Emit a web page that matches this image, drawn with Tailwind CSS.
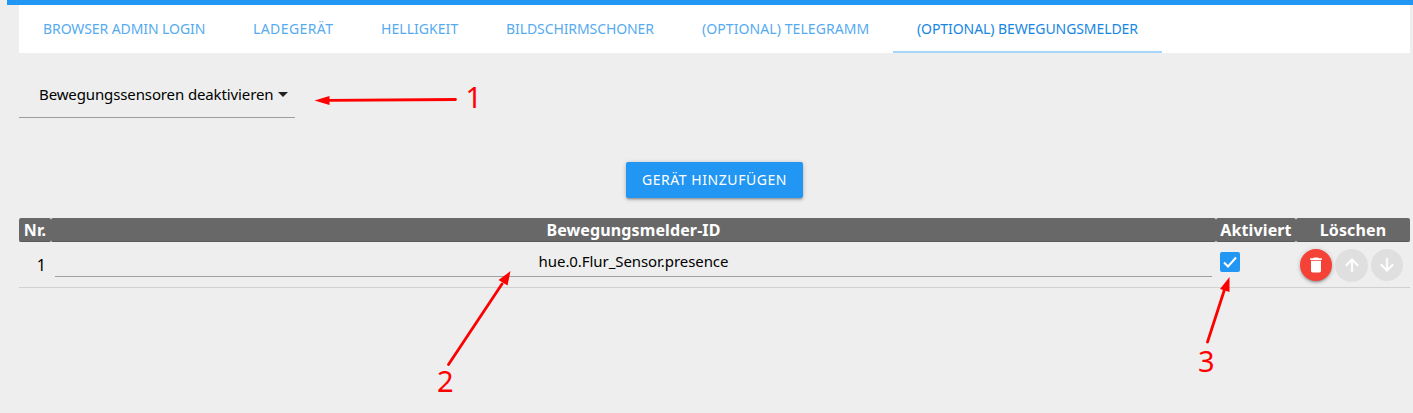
<!DOCTYPE html>
<html lang="de">
<head>
<meta charset="utf-8">
<title>Bewegungsmelder</title>
<script src="https://cdn.jsdelivr.net/npm/@tailwindcss/browser@4"></script>
</head>
<body class="relative h-[413px] w-[1413px] overflow-hidden bg-[#eeeeee] font-['Noto_Sans',sans-serif] text-black">
<div class="ml-[7px] h-[5px] bg-[#2196f3]"></div>
<main class="ml-[19px] w-[1391px]">
  <nav class="flex h-12 bg-white text-[14px] leading-[48px] whitespace-nowrap text-[#56abf0]">
    <a class="w-[210px] pl-6 tracking-[-0.09px]">BROWSER ADMIN LOGIN</a>
    <a class="w-[128px] pl-6 tracking-[0.4px]">LADEGERÄT</a>
    <a class="w-[125px] pl-6 tracking-[0.05px]">HELLIGKEIT</a>
    <a class="w-[196px] pl-6 tracking-[-0.09px]">BILDSCHIRMSCHONER</a>
    <a class="w-[215px] pl-6 tracking-[0.08px]">(OPTIONAL) TELEGRAMM</a>
    <a class="w-[269px] border-b-2 border-[#a6d5fa] pl-6 tracking-[-0.08px] text-[#1686e4]">(OPTIONAL) BEWEGUNGSMELDER</a>
  </nav>
  <div class="mt-[18px] flex h-[47px] w-[276px] items-center border-b border-[#9e9e9e] pl-[20px] text-[15px] whitespace-nowrap">
    <span class="w-[239px] pt-px tracking-[-0.12px]">Bewegungssensoren deaktivieren</span>
    <svg class="h-[5px] w-[10px]" viewBox="0 0 10 5"><path d="M0 0h10L5 5z" fill="#212121"/></svg>
  </div>
  <div class="mt-11 flex h-9 pl-[607px]">
    <button class="w-[177px] rounded-[2px] bg-[#2196f3] text-[14px] leading-9 tracking-[0.55px] whitespace-nowrap text-white shadow-[0_2px_2px_rgba(0,0,0,0.14),0_3px_1px_-2px_rgba(0,0,0,0.12),0_1px_5px_rgba(0,0,0,0.2)]">GERÄT HINZUFÜGEN</button>
  </div>
  <div class="mt-5 flex h-6 bg-[#eeeeee] text-center text-[16px] leading-6 font-bold tracking-[0.12px] whitespace-nowrap text-white">
    <div class="w-8 rounded-[2px] border-b border-[#5a5a5a] bg-[#686868]">Nr.</div>
    <div class="w-[1165px] rounded-[2px] border-b border-[#5a5a5a] bg-[#686868]">Bewegungsmelder-ID</div>
    <div class="w-20 rounded-[2px] border-b border-[#5a5a5a] bg-[#686868]">Aktiviert</div>
    <div class="w-[114px] rounded-[2px] border-b border-[#5a5a5a] bg-[#686868]">Löschen</div>
  </div>
  <div class="flex h-[46px] border-b border-[#d0d0d0] text-[16px]">
    <div class="w-9 pt-[11px] pr-[9px] text-right">1</div>
    <div class="h-[35px] w-[1157px] border-b border-[#9e9e9e] pt-[8px] text-center text-[15px] tracking-[-0.07px]">hue.0.Flur_Sensor.presence</div>
    <div class="w-[88px] pt-[10px] pl-2">
      <svg class="h-5 w-5 rounded-[2px] bg-[#2196f3]" viewBox="0 0 20 20" fill="none" stroke="white" stroke-width="2"><path d="M4 10.5l4 4 8-9"/></svg>
    </div>
    <div class="flex gap-[3px] pt-[7px]">
      <div class="flex size-8 items-center justify-center rounded-full bg-[#f44336] shadow-[0_2px_2px_rgba(0,0,0,0.14),0_3px_1px_-2px_rgba(0,0,0,0.12),0_1px_5px_rgba(0,0,0,0.2)]">
        <svg class="size-5" viewBox="0 0 24 24" fill="white"><path d="M6 19c0 1.1.9 2 2 2h8c1.1 0 2-.9 2-2V7H6v12zM19 4h-3.5l-1-1h-5l-1 1H5v2h14V4z"/></svg>
      </div>
      <div class="flex size-[33px] items-center justify-center rounded-full bg-[#dfdfdf] pb-px">
        <svg class="size-5" viewBox="0 0 24 24" fill="white" stroke="white" stroke-width=".6"><path d="M4 12l1.41 1.41L11 7.83V20h2V7.83l5.58 5.59L20 12l-8-8-8 8z"/></svg>
      </div>
      <div class="flex size-8 items-center justify-center rounded-full bg-[#dfdfdf] pb-px">
        <svg class="size-5" viewBox="0 0 24 24" fill="white" stroke="white" stroke-width=".6"><path d="M20 12l-1.41-1.41L13 16.17V4h-2v12.17l-5.58-5.59L4 12l8 8 8-8z"/></svg>
      </div>
    </div>
  </div>
</main>
<svg class="absolute inset-0" width="1413" height="413" viewBox="0 0 1413 413" fill="red" stroke="none">
  <g stroke="red" stroke-width="2.800" stroke-linecap="round"><path d="M328 100.300L455.500 99.500M448.500 364.500L502 284M1207.500 342L1225 288"/></g>
  <path d="M314.500 100.500L329.500 96V105zM510.500 271L498.500 280 507.500 285.500zM1229.500 277L1220 289 1229.500 292z"/>
  <g font-family="Noto Sans, sans-serif" font-size="29"><text x="465.500" y="108">1</text><text x="437" y="392">2</text><text x="1198" y="371.500">3</text></g>
</svg>
</body>
</html>
